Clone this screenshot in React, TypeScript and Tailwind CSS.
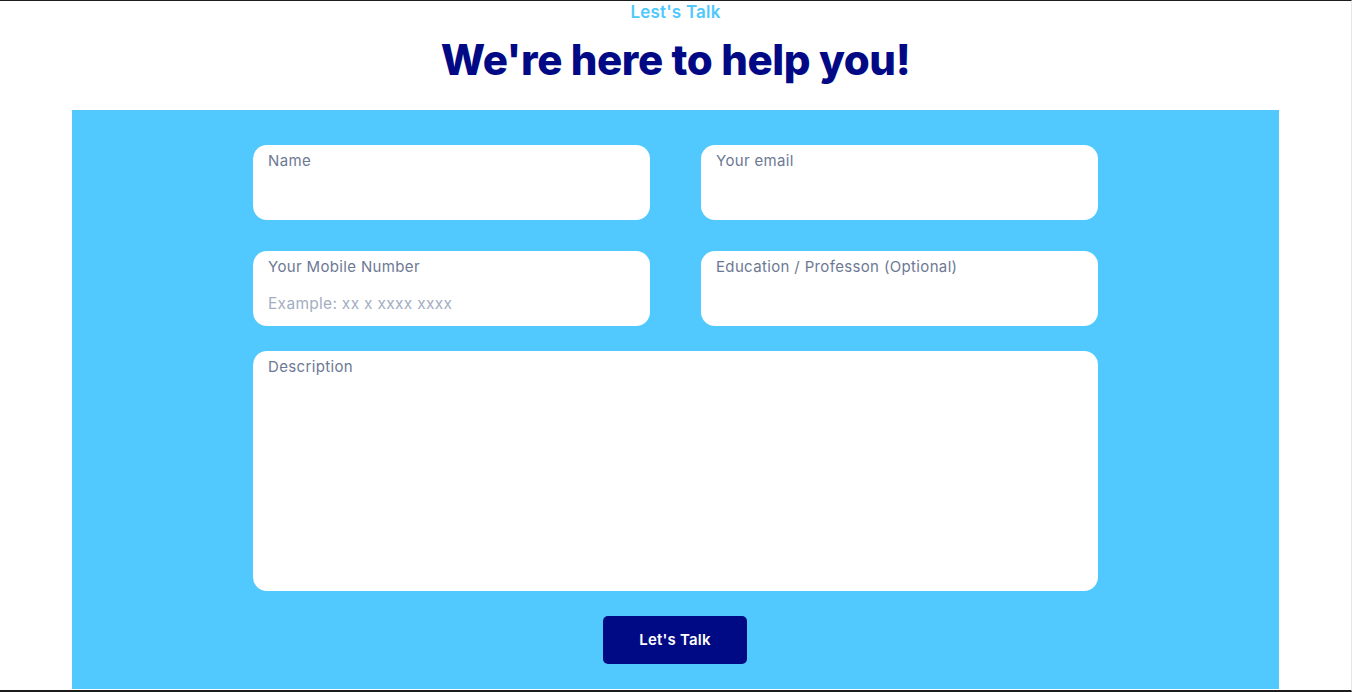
import React from 'react';

const font = { fontFamily: 'Inter, "Noto Sans", sans-serif' };

const Field = ({ label, placeholder }: { label: string; placeholder?: string }) => (
  <label className="flex h-[75px] flex-col rounded-[14px] bg-white px-[15px] pt-[5px]">
    <span className="text-[15px] leading-[22px] tracking-[0.35px] text-[#6d7994]">{label}</span>
    <input
      placeholder={placeholder}
      className="mt-[15px] w-full bg-transparent text-[15.5px] leading-[22px] tracking-[0.3px] text-[#334155] outline-none placeholder:text-[#a3aec2]"
    />
  </label>
);

export default function App() {
  return (
    <div
      className="flex h-[692px] flex-col border-t border-b-2 border-r border-t-[#1c1c1c] border-b-[#1c1c1c] border-r-[#e6e6e6] bg-white"
      style={font}
    >
      <p className="text-center text-[17px] font-semibold leading-[22px] tracking-[0.2px] text-[#4fc8fd]">Lest's Talk</p>
      <h1 className="mt-[4px] text-center text-[42px] font-extrabold leading-[66px] tracking-[-0.4px] text-[#010a84]">
        We're here to help you!
      </h1>
      <section className="mx-auto mt-[17px] w-[1207px] bg-[#51c9fe] pt-[35px] pb-[25px]">
        <form className="mx-auto w-[845px]" onSubmit={(e) => e.preventDefault()}>
          <div className="grid grid-cols-2 gap-x-[51px] gap-y-[31px]">
            <Field label="Name" />
            <Field label="Your email" />
            <Field label="Your Mobile Number" placeholder="Example: xx x xxxx xxxx" />
            <Field label="Education / Professon (Optional)" />
          </div>
          <label className="mt-[25px] flex h-[240px] flex-col rounded-[14px] bg-white px-[15px] pt-[5px]">
            <span className="text-[15px] leading-[22px] tracking-[0.35px] text-[#6d7994]">Description</span>
            <textarea className="mt-[4px] flex-1 resize-none bg-transparent text-[15px] text-[#334155] outline-none" />
          </label>
          <div className="mt-[25px] flex justify-center">
            <button
              type="submit"
              className="ml-[-1px] h-[48px] w-[144px] rounded-[5px] bg-[#010a85] text-[15px] font-semibold tracking-[0.2px] text-white"
            >
              Let's Talk
            </button>
          </div>
        </form>
      </section>
    </div>
  );
}
